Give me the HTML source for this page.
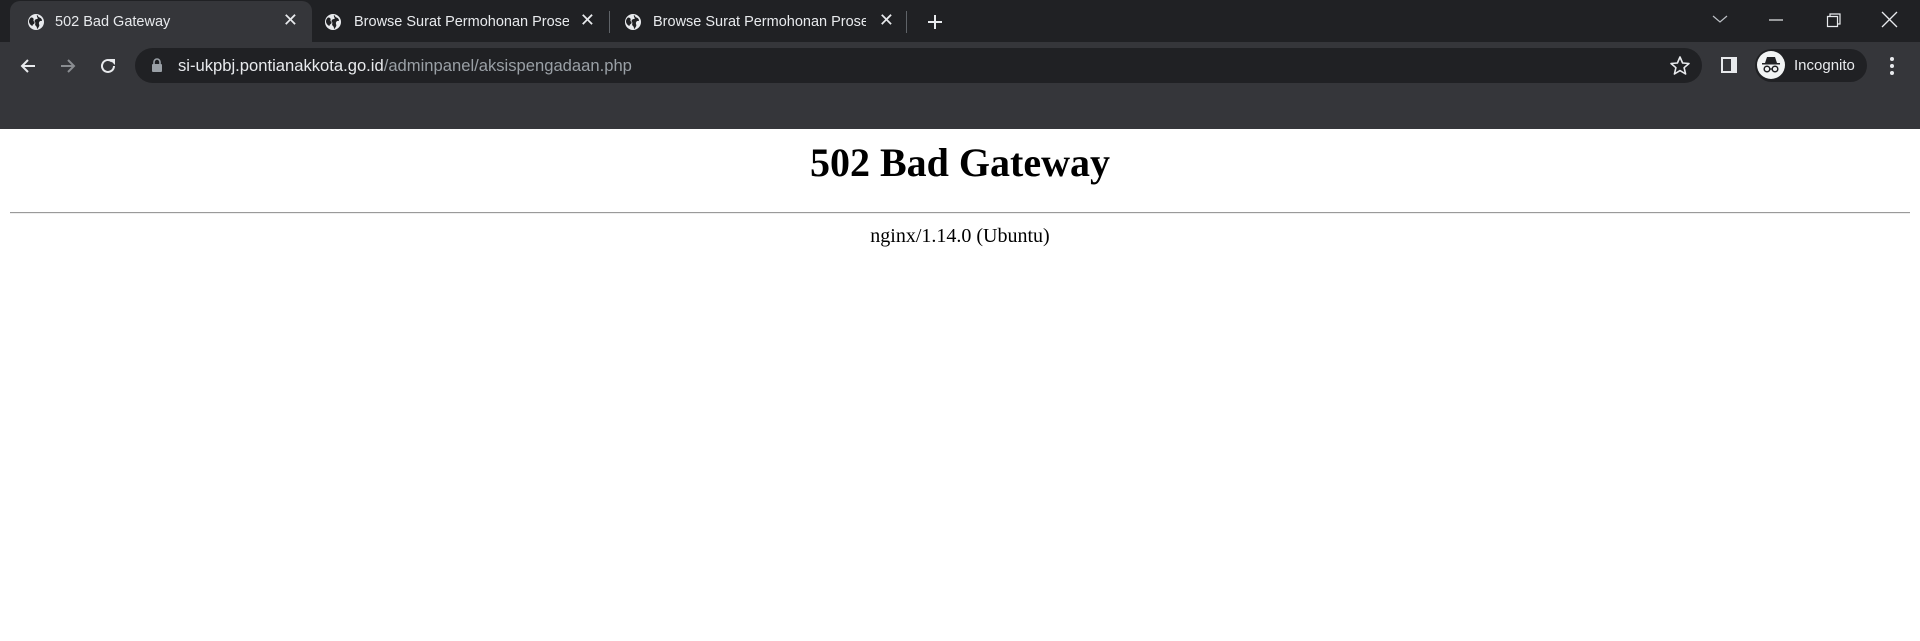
<!DOCTYPE html>
<html><head><meta charset="utf-8"><style>
*{margin:0;padding:0;box-sizing:border-box}
body{width:1920px;height:641px;background:#fff;position:relative;overflow:hidden;font-family:"Liberation Sans",sans-serif}
.strip{position:absolute;left:0;top:0;width:1920px;height:43px;background:#202124}
.tool{position:absolute;left:0;top:42px;width:1920px;height:87px;background:#35363a}
.tab{position:absolute;top:1px;height:42px;color:#e8eaed;font-size:14.5px}
.tab.act{background:#35363a;border-radius:10px 10px 0 0}
.tab .t{position:absolute;left:45px;top:13px;white-space:nowrap;overflow:hidden;width:220px}
.tab .x{position:absolute;right:14px;top:9px;font-size:18px}
.ab{position:absolute}
.omni{position:absolute;left:135px;top:48px;width:1567px;height:35px;background:#202124;border-radius:18px}
.url{position:absolute;left:178px;top:56px;font-size:16.6px;color:#e8eaed;white-space:nowrap}
.url span{color:#9aa0a6}
.pill{position:absolute;left:1755px;top:49px;width:112px;height:33px;background:#202124;border-radius:17px}
h1{position:absolute;left:0;width:1920px;top:139px;text-align:center;font-family:"Liberation Serif",serif;font-size:40px;font-weight:bold}
hr{position:absolute;left:10px;width:1900px;top:212px;border:0;border-top:1px solid #9a9a9a;border-bottom:1px solid #eee}
.ng{position:absolute;left:0;width:1920px;top:225px;text-align:center;font-family:"Liberation Serif",serif;font-size:20px}
</style></head><body>
<div class="strip"></div>
<div class="tool"></div>
<svg width="0" height="0" style="position:absolute"><defs><g id="gl"><circle cx="9" cy="9" r="8" fill="#e8eaed"/><path d="M4 4.5c2 0 3 1 2.5 2.5s1.5 1.5 1 3-2 1-2 3c-1.5-.5-3.5-2.5-3.5-4.5 0-1.5.7-3 2-4zM10 2c1.5 1 1 2 2.5 2.5S15 6 15 8c-1.5-.5-2.5 0-3 1.5s1 2.5 0 4-1 2-2 2.5c0-2-.5-2.5-1.5-3.5S9 10 8 9s0-3 2-3-1-3 0-4z" fill="#202124"/></g></defs></svg>
<div class="tab act" style="left:10px;width:302px"><svg class="ab" style="left:17px;top:12px" width="18" height="18"><use href="#gl"/></svg><div class="t">502 Bad Gateway</div><div class="x">✕</div></div>
<div class="tab" style="left:312px;width:297px"><svg class="ab" style="left:12px;top:12px" width="18" height="18"><use href="#gl"/></svg><div class="t" style="left:42px;width:215px">Browse Surat Permohonan Proses</div><div class="x">✕</div></div>
<div class="ab" style="left:609px;top:11px;width:1px;height:22px;background:#5f6368"></div>
<div class="tab" style="left:609px;width:297px"><svg class="ab" style="left:15px;top:12px" width="18" height="18"><use href="#gl"/></svg><div class="t" style="left:44px;width:213px">Browse Surat Permohonan Proses</div><div class="x" style="right:12px">✕</div></div>
<div class="ab" style="left:906px;top:11px;width:1px;height:22px;background:#5f6368"></div>
<svg class="ab" style="left:925px;top:12px" width="20" height="20"><path d="M10 3v14M3 10h14" stroke="#e8eaed" stroke-width="2"/></svg>
<svg class="ab" style="left:1710px;top:12px" width="20" height="14"><path d="M3 4l7 6 7-6" stroke="#bdc1c6" fill="none" stroke-width="1.2"/></svg>
<svg class="ab" style="left:1768px;top:12px" width="16" height="16"><path d="M1 8h14" stroke="#e8eaed" stroke-width="1.2"/></svg>
<svg class="ab" style="left:1826px;top:12px" width="16" height="16"><path d="M1.5 4.5h10v10h-10zM4 4.5V2h10v10h-2.5" stroke="#e8eaed" fill="none" stroke-width="1.2"/></svg>
<svg class="ab" style="left:1881px;top:11px" width="17" height="17"><path d="M1 1l15 15M16 1L1 16" stroke="#e8eaed" stroke-width="1.3"/></svg>
<svg class="ab" style="left:18px;top:56px" width="20" height="20"><path d="M17 10H4M10 4l-6 6 6 6" stroke="#e8eaed" stroke-width="2" fill="none"/></svg>
<svg class="ab" style="left:58px;top:56px" width="20" height="20"><path d="M3 10h13M10 4l6 6-6 6" stroke="#8a8d91" stroke-width="2" fill="none"/></svg>
<svg class="ab" style="left:98px;top:56px" width="20" height="20"><path d="M16 10a6 6 0 1 1-2-4.5" stroke="#e8eaed" stroke-width="2" fill="none"/><path d="M11 3h6v6z" fill="#e8eaed"/></svg>
<div class="omni"></div>
<svg class="ab" style="left:150px;top:57px" width="14" height="16"><path d="M4 7V5a3 3 0 0 1 6 0v2" stroke="#9aa0a6" stroke-width="1.6" fill="none"/><rect x="2" y="7" width="10" height="8" rx="1" fill="#9aa0a6"/></svg>
<div class="url">si-ukpbj.pontianakkota.go.id<span>/adminpanel/aksispengadaan.php</span></div>
<svg class="ab" style="left:1669px;top:55px" width="22" height="22"><path d="M11 2l2.6 6 6.4.5-4.9 4.2 1.5 6.3L11 15.6 5.4 19l1.5-6.3L2 8.5 8.4 8z" stroke="#e8eaed" stroke-width="1.6" fill="none" stroke-linejoin="round"/></svg>
<svg class="ab" style="left:1720px;top:56px" width="18" height="18"><rect x="1" y="1" width="16" height="16" fill="#e8eaed"/><rect x="3" y="3" width="8" height="12" fill="#35363a"/></svg>
<div class="pill"></div>
<svg class="ab" style="left:1756px;top:50px" width="30" height="30"><circle cx="15" cy="15" r="14" fill="#f1f3f4"/><path d="M9 13l2-6h8l2 6z M6 13h18v1.5H6z" fill="#202124"/><circle cx="11" cy="19" r="2.8" stroke="#202124" stroke-width="1.5" fill="none"/><circle cx="19" cy="19" r="2.8" stroke="#202124" stroke-width="1.5" fill="none"/><path d="M13.8 19h2.4" stroke="#202124" stroke-width="1.3"/></svg>
<div class="ab" style="left:1794px;top:57px;color:#e8eaed;font-size:15px">Incognito</div>
<svg class="ab" style="left:1887px;top:55px" width="10" height="22"><circle cx="5" cy="4" r="2" fill="#e8eaed"/><circle cx="5" cy="11" r="2" fill="#e8eaed"/><circle cx="5" cy="18" r="2" fill="#e8eaed"/></svg>
<h1>502 Bad Gateway</h1>
<hr>
<div class="ng">nginx/1.14.0 (Ubuntu)</div>
</body></html>
